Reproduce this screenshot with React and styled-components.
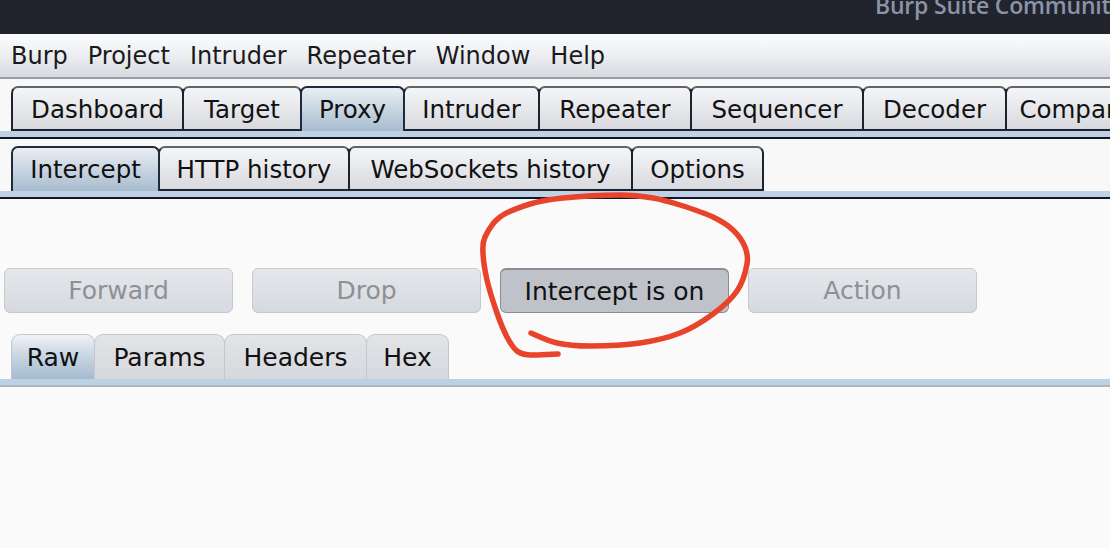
import React from "react";
import styled, { createGlobalStyle } from "styled-components";

const Global = createGlobalStyle`
  html, body { margin: 0; padding: 0; background: #fafafa; }
  body { font-family: "DejaVu Sans", "Liberation Sans", sans-serif; color: #111; }
  * { box-sizing: border-box; }
`;

const Page = styled.div`
  position: relative;
  width: 1110px;
  height: 548px;
  overflow: hidden;
  background: #fafafa;
  display: flex;
  flex-direction: column;
`;

const TitleBar = styled.div`
  height: 34px;
  flex: none;
  background: #21242d;
  overflow: hidden;
  white-space: nowrap;
  padding-left: 875px;
`;

const TitleText = styled.span`
  display: block;
  margin-top: -6px;
  font-family: "Open Sans", Lato, sans-serif;
  font-weight: 600;
  font-size: 23px;
  line-height: 23px;
  color: #8a94a8;
  letter-spacing: -0.2px;
`;

const MenuBar = styled.div`
  height: 45px;
  flex: none;
  display: flex;
  align-items: center;
  padding-left: 1px;
  background: linear-gradient(#fbfcfd 0%, #eef0f3 45%, #d6d9df 100%);
  border-bottom: 2px solid #9a9da4;
`;

const MenuItem = styled.span`
  font-size: 24px;
  padding: 0 10px;
  color: #1a1a1a;
`;

const TabStrip = styled.div`
  flex: none;
  display: flex;
  flex-direction: column;
  background: ${(p) => (p.$light ? "#fafafa" : "#f8f8f8")};
  padding-top: ${(p) => p.$top}px;
`;

const TabRow = styled.div`
  display: flex;
  padding-left: 11px;
  height: 45px;
  white-space: nowrap;
`;

const Tab = styled.div`
  flex: none;
  position: relative;
  display: flex;
  align-items: center;
  justify-content: center;
  width: ${(p) => p.$w}px;
  height: 100%;
  font-size: ${(p) => (p.$light ? 25 : 24.5)}px;
  color: #111;
  margin-left: ${(p) => (p.$first ? 0 : p.$light ? -1 : -2)}px;
  border-style: solid;
  border-width: ${(p) => (p.$light ? "1px 1px 0 1px" : "2px 2px 0 2px")};
  border-color: ${(p) =>
    p.$light ? "#c3c6cc" : p.$active ? "#1f2a3c" : "#5f636b #1d222c"};
  border-radius: ${(p) => (p.$light ? "9px 9px 0 0" : "7px 7px 0 0")};
  background: ${(p) =>
    p.$active
      ? p.$light
        ? "linear-gradient(#f0f3f7 0%, #c9d6e3 45%, #a6bbd0 100%)"
        : "linear-gradient(#e9eef3 0%, #cbd7e3 45%, #a8bccf 100%)"
      : p.$light
      ? "linear-gradient(#e3e4e8, #d7d8dd)"
      : "linear-gradient(#f4f5f7 0%, #e6e7eb 50%, #d6d8dd 100%)"};
  box-shadow: ${(p) =>
    p.$active || p.$light ? "none" : "inset 0 -2px 0 #1d222c"};
  z-index: ${(p) => (p.$active ? 2 : 1)};
`;

const Band = styled.div`
  height: 8px;
  background: ${(p) => (p.$light ? "#bdd1e5" : "#bfd2e5")};
  border-bottom: 2px solid ${(p) => (p.$light ? "#b1b4ba" : "#111722")};
`;

const Content = styled.div`
  flex: 1;
  display: flex;
  flex-direction: column;
  background: #fafafa;
`;

const ButtonRow = styled.div`
  display: flex;
  gap: 19px;
  padding: 69px 0 0 4px;
`;

const Button = styled.div`
  width: 229px;
  height: 45px;
  display: flex;
  align-items: center;
  justify-content: center;
  font-size: 25px;
  border-radius: 6px;
  border: 1px solid ${(p) => (p.$on ? "#8b8d93" : "#c6c9cf")};
  border-top-width: ${(p) => (p.$on ? 2 : 1)}px;
  color: ${(p) => (p.$on ? "#111" : "#8e9095")};
  background: ${(p) =>
    p.$on ? "#bfc2c9" : "linear-gradient(#e5e7eb, #d6d9df)"};
`;

const Overlay = styled.svg`
  position: absolute;
  left: 0;
  top: 0;
  pointer-events: none;
`;

const pts = [
  [531, 333], [557, 343], [590, 346], [640, 343], [680, 333], [713, 314],
  [737, 291], [747, 264], [745, 247], [733, 230], [713, 217], [680, 205],
  [653, 198], [620, 195], [563, 198], [530, 204], [500, 217], [485, 237],
  [483, 253], [487, 280], [497, 313], [507, 337], [517, 351], [530, 355],
  [558, 354],
];

function smoothPath(p) {
  let d = `M${p[0][0]},${p[0][1]}`;
  for (let i = 0; i < p.length - 1; i++) {
    const p0 = p[i - 1] || p[i];
    const p1 = p[i];
    const p2 = p[i + 1];
    const p3 = p[i + 2] || p2;
    const c1x = p1[0] + (p2[0] - p0[0]) / 6;
    const c1y = p1[1] + (p2[1] - p0[1]) / 6;
    const c2x = p2[0] - (p3[0] - p1[0]) / 6;
    const c2y = p2[1] - (p3[1] - p1[1]) / 6;
    d += ` C${c1x.toFixed(1)},${c1y.toFixed(1)} ${c2x.toFixed(1)},${c2y.toFixed(1)} ${p2[0]},${p2[1]}`;
  }
  return d;
}

const mainTabs = [
  ["Dashboard", 173], ["Target", 120], ["Proxy", 105], ["Intruder", 137],
  ["Repeater", 154], ["Sequencer", 174], ["Decoder", 145], ["Comparer", 150],
];
const subTabs = [
  ["Intercept", 149], ["HTTP history", 192], ["WebSockets history", 285], ["Options", 133],
];
const msgTabs = [["Raw", 84], ["Params", 131], ["Headers", 143], ["Hex", 83]];

export default function App() {
  return (
    <Page>
      <Global />
      <TitleBar>
        <TitleText>Burp Suite Community Edition v2020.9.2 - Temporary Project</TitleText>
      </TitleBar>
      <MenuBar>
        {["Burp", "Project", "Intruder", "Repeater", "Window", "Help"].map((m) => (
          <MenuItem key={m}>{m}</MenuItem>
        ))}
      </MenuBar>
      <TabStrip $top={7}>
        <TabRow>
          {mainTabs.map(([t, w], i) => (
            <Tab key={t} $w={w} $first={i === 0} $active={t === "Proxy"}>{t}</Tab>
          ))}
        </TabRow>
        <Band />
      </TabStrip>
      <TabStrip $top={7}>
        <TabRow>
          {subTabs.map(([t, w], i) => (
            <Tab key={t} $w={w} $first={i === 0} $active={t === "Intercept"}>{t}</Tab>
          ))}
        </TabRow>
        <Band />
      </TabStrip>
      <Content>
        <ButtonRow>
          <Button>Forward</Button>
          <Button>Drop</Button>
          <Button $on>Intercept is on</Button>
          <Button>Action</Button>
        </ButtonRow>
        <TabStrip $light $top={21}>
          <TabRow>
            {msgTabs.map(([t, w], i) => (
              <Tab key={t} $w={w} $light $first={i === 0} $active={t === "Raw"}>{t}</Tab>
            ))}
          </TabRow>
          <Band $light />
        </TabStrip>
      </Content>
      <Overlay width="1110" height="548" viewBox="0 0 1110 548">
        <path
          d={smoothPath(pts)}
          fill="none"
          stroke="#e8432b"
          strokeWidth="5.5"
          strokeLinecap="round"
          strokeLinejoin="round"
        />
      </Overlay>
    </Page>
  );
}
